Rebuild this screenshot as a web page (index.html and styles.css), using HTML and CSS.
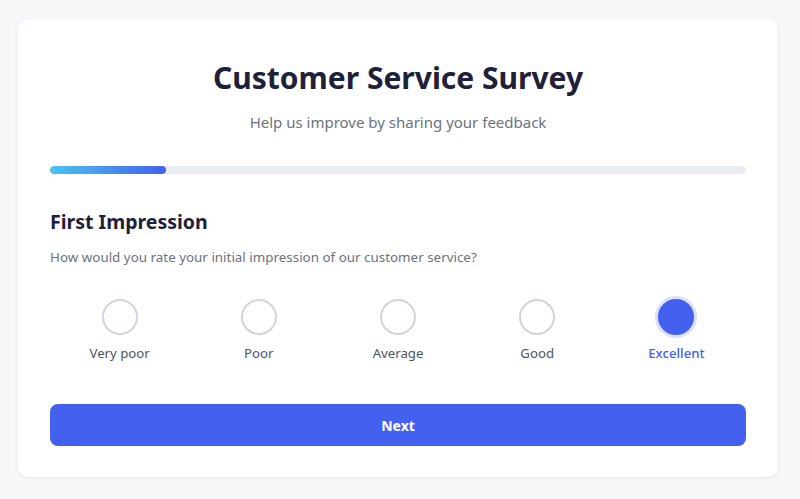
FILE: index.html
```html
<!DOCTYPE html>
<html lang="en">
<head>
<meta charset="utf-8">
<title>Customer Service Survey</title>
<link rel="stylesheet" href="styles.css">
</head>
<body>
<main class="card">
  <header class="head">
    <h1 class="title">Customer Service Survey</h1>
    <p class="subtitle">Help us improve by sharing your feedback</p>
  </header>
  <div class="progress"><div class="progress-fill" style="width:16.67%"></div></div>
  <section class="question">
    <h2 class="q-title">First Impression</h2>
    <p class="q-text">How would you rate your initial impression of our customer service?</p>
    <div class="options">
      <label class="option"><span class="dot"></span><span class="opt-label">Very poor</span></label>
      <label class="option"><span class="dot"></span><span class="opt-label">Poor</span></label>
      <label class="option"><span class="dot"></span><span class="opt-label">Average</span></label>
      <label class="option"><span class="dot"></span><span class="opt-label">Good</span></label>
      <label class="option selected"><span class="dot"></span><span class="opt-label">Excellent</span></label>
    </div>
  </section>
  <button class="next">Next</button>
</main>
</body>
</html>
```

FILE: styles.css
```css
* { box-sizing: border-box; }
html, body { margin: 0; padding: 0; }
body {
  background: #f7f8fa;
  font-family: "Noto Sans", "Open Sans", sans-serif;
  padding: 19px 22px 22px 18px;
}
.card {
  background: #ffffff;
  border-radius: 10px;
  box-shadow: 0 1px 4px rgba(0,0,0,0.08);
  padding: 32px 32px 31px 32px;
  width: 760px;
  height: 458px;
  display: flex;
  flex-direction: column;
}
.head { text-align: center; }
.title {
  margin: 5px 0 0;
  font-size: 30px;
  font-weight: 700;
  color: #1e2139;
  line-height: 44px;
}
.subtitle {
  margin: 11px 0 0;
  font-size: 15px;
  color: #6b7280;
  line-height: 22px;
}
.progress {
  margin-top: 33px;
  height: 8px;
  background: #e9ecf0;
  border-radius: 4px;
  overflow: hidden;
}
.progress-fill {
  height: 100%;
  border-radius: 4px;
  background: linear-gradient(90deg, #4cc3ee, #4361ee);
}
.question { margin-top: 34px; }
.q-title {
  margin: 0;
  font-size: 19.5px;
  font-weight: 700;
  color: #1e2139;
  line-height: 28px;
}
.q-text {
  margin: 11px 0 0;
  font-size: 13.4px;
  color: #6b7280;
  line-height: 20px;
}
.options {
  margin-top: 32px;
  display: grid;
  grid-template-columns: repeat(5, 1fr);
}
.option {
  display: flex;
  flex-direction: column;
  align-items: center;
}
.dot {
  width: 36px;
  height: 36px;
  border-radius: 50%;
  border: 2px solid #d1d5db;
  background: #fff;
}
.opt-label {
  margin-top: 8px;
  font-size: 13.2px;
  color: #4b5563;
  line-height: 20px;
}
.selected .dot {
  background: #4361ee;
  border-color: #4361ee;
  box-shadow: 0 0 0 3px rgba(67,97,238,0.2);
}
.selected .opt-label { color: #4361ee; font-weight: 500; }
.next {
  margin-top: auto;
  height: 42px;
  border: none;
  border-radius: 8px;
  background: #4361ee;
  color: #fff;
  font-family: inherit;
  font-size: 14px;
  font-weight: 700;
}
```
